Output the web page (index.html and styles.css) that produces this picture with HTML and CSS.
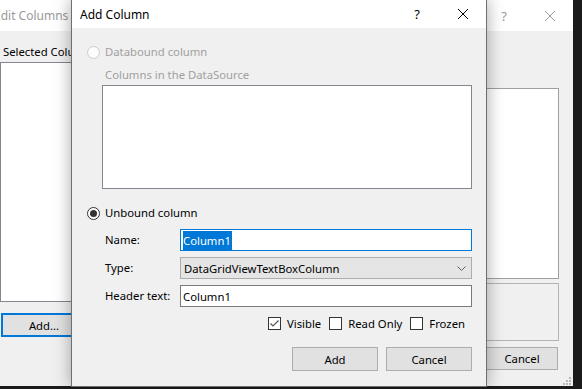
FILE: index.html
```html
<!DOCTYPE html>
<html>
  <head>
    <meta charset="utf-8" />
    <title>Add Column</title>
    <link rel="stylesheet" href="styles.css">
  </head>
  <body>
    <div class="window back">
      <div class="titlebar">
        <span class="title">Edit Columns</span>
        <span class="caption-btn help">?</span>
        <span class="caption-btn close">
          <svg width="10" height="10" viewBox="0 0 10 10"><path d="M0 0L10 10M10 0L0 10" /></svg>
        </span>
      </div>
      <div class="back-body">
        <div class="col-left">
          <div class="label">Selected Columns:</div>
          <div class="listbox selected-list"></div>
          <button class="btn focused add-more">Add...</button>
        </div>
        <div class="col-right">
          <div class="listbox props"></div>
          <div class="groupbox"></div>
          <div class="btn-row">
            <button class="btn small">Cancel</button>
          </div>
        </div>
      </div>
      <svg class="grip" width="9" height="9" viewBox="0 0 9 9">
        <rect x="7" y="1" width="2" height="2" />
        <rect x="4" y="4" width="2" height="2" />
        <rect x="7" y="4" width="2" height="2" />
        <rect x="1" y="7" width="2" height="2" />
        <rect x="4" y="7" width="2" height="2" />
        <rect x="7" y="7" width="2" height="2" />
      </svg>
    </div>

    <div class="window front">
      <div class="titlebar">
        <span class="title">Add Column</span>
        <span class="caption-btn help">?</span>
        <span class="caption-btn close">
          <svg width="10" height="10" viewBox="0 0 10 10"><path d="M0 0L10 10M10 0L0 10" /></svg>
        </span>
      </div>
      <div class="front-body">
        <label class="radio-row disabled">
          <span class="radio"></span>
          <span>Databound column</span>
        </label>
        <div class="indent">
          <div class="label disabled source-label">Columns in the DataSource</div>
          <div class="listbox source-list"></div>
        </div>
        <label class="radio-row unbound">
          <span class="radio checked"></span>
          <span>Unbound column</span>
        </label>
        <div class="indent">
          <div class="form-grid">
            <span class="label">Name:</span>
            <div class="textbox active"><span class="selection">Column1</span></div>
            <span class="label">Type:</span>
            <div class="combo">
              <span>DataGridViewTextBoxColumn</span>
              <svg width="9" height="5" viewBox="0 0 9 5"><path d="M0.5 0.5L4.5 4.5L8.5 0.5" /></svg>
            </div>
            <span class="label">Header text:</span>
            <div class="textbox">Column1</div>
          </div>
        </div>
        <div class="check-row">
          <label class="check-item">
            <span class="checkbox">
              <svg width="11" height="11" viewBox="0 0 11 11"><path d="M1.5 5.5L4 8L9.5 2.5" /></svg>
            </span>
            Visible
          </label>
          <label class="check-item"><span class="checkbox"></span>Read Only</label>
          <label class="check-item"><span class="checkbox"></span>Frozen</label>
        </div>
        <div class="btn-row dialog-buttons">
          <button class="btn">Add</button>
          <button class="btn">Cancel</button>
        </div>
      </div>
    </div>
  </body>
</html>
```

FILE: styles.css
```css
* {
  box-sizing: border-box;
}
html,
body {
  margin: 0;
  height: 100%;
}
body {
  background: #1b1b1b;
  font-family: "Segoe UI", "Noto Sans", sans-serif;
  font-size: 11.3px;
  color: #000;
  overflow: hidden;
  position: relative;
}

/* windows */
.window {
  position: absolute;
  background: #f0f0f0;
  display: flex;
  flex-direction: column;
}
.back {
  left: -14px;
  top: 0;
  width: 587px;
  height: 386px;
}
.front {
  left: 71px;
  top: -1px;
  width: 416px;
  height: 388px;
  border: 1px solid #6f6f6f;
  box-shadow: 0 0 16px rgba(0, 0, 0, 0.35);
}
.titlebar {
  background: #fff;
  display: flex;
  align-items: center;
  flex-shrink: 0;
}
.back .titlebar {
  height: 31px;
  color: #9a9a9a;
}
.front .titlebar {
  height: 28px;
}
.title {
  flex: 1;
  padding-left: 8px;
  font-size: 12px;
}
.caption-btn {
  width: 46px;
  align-self: stretch;
  display: flex;
  align-items: center;
  justify-content: center;
}
.caption-btn.help {
  font-size: 13px;
}
.caption-btn svg path {
  stroke: currentColor;
  stroke-width: 1;
  fill: none;
}

/* shared controls */
.label {
  height: 16px;
  line-height: 16px;
  margin-left: 3px;
  white-space: nowrap;
}
.disabled {
  color: #a0a0a0;
}
.listbox {
  background: #fff;
  border: 1px solid #828790;
}
.btn {
  font: inherit;
  color: #000;
  background: #e1e1e1;
  border: 1px solid #adadad;
  padding: 0;
  width: 86px;
  height: 24px;
}
.btn.focused {
  border: 2px solid #0078d7;
}
.btn-row {
  display: flex;
  justify-content: flex-end;
  gap: 8px;
}

/* back dialog */
.back-body {
  flex: 1;
  display: grid;
  grid-template-columns: 250px 1fr;
  column-gap: 20px;
  padding: 13px 14px 0 14px;
}
.col-left,
.col-right {
  display: flex;
  flex-direction: column;
}
.selected-list {
  margin-top: 2px;
  height: 240px;
}
.add-more {
  margin: 11px 0 0 1px;
}
.props {
  margin-top: 44px;
  height: 191px;
  border-color: #a0a0a0;
}
.groupbox {
  margin-top: 4px;
  height: 58px;
  border: 1px solid #b4b4b4;
}
.col-right .btn-row {
  margin: 6px 1px 0 0;
}
.btn.small {
  width: 72px;
  height: 23px;
}
.grip {
  position: absolute;
  right: 2px;
  bottom: 1px;
  fill: #b8b8b8;
}

/* add column dialog */
.front-body {
  display: flex;
  flex-direction: column;
  padding: 16px 14px 0 15px;
}
.radio-row {
  display: flex;
  align-items: center;
  gap: 5px;
  height: 16px;
  line-height: 16px;
}
.radio {
  width: 13px;
  height: 13px;
  border-radius: 50%;
  border: 1px solid #cccccc;
  background: #fcfcfc;
  position: relative;
}
.radio.checked {
  border-color: #333;
  background: #fff;
}
.radio.checked::after {
  content: "";
  position: absolute;
  left: 2px;
  top: 2px;
  width: 7px;
  height: 7px;
  border-radius: 50%;
  background: #333;
}
.indent {
  padding-left: 15px;
}
.source-label {
  margin-top: 7px;
}
.source-list {
  margin-top: 2px;
  height: 104px;
}
.unbound {
  margin-top: 16px;
}
.form-grid {
  margin-top: 8px;
  display: grid;
  grid-template-columns: 78px 1fr;
  grid-auto-rows: 22px;
  row-gap: 6px;
  align-items: center;
}
.textbox {
  height: 22px;
  background: #fff;
  border: 1px solid #7a7a7a;
  padding: 0 2px;
  display: flex;
  align-items: center;
}
.textbox.active {
  border-color: #0078d7;
}
.selection {
  background: #0078d7;
  color: #fff;
  line-height: 19px;
  padding-right: 1px;
}
.combo {
  height: 22px;
  background: #e5e5e5;
  border: 1px solid #adadad;
  padding: 0 5px 0 3px;
  display: flex;
  align-items: center;
  justify-content: space-between;
}
.combo svg path {
  stroke: #606060;
  fill: none;
}
.check-row {
  margin-top: 8px;
  height: 16px;
  display: flex;
  justify-content: flex-end;
  gap: 8px;
  padding-right: 7px;
}
.check-item {
  display: flex;
  align-items: center;
  gap: 6px;
  white-space: nowrap;
}
.checkbox {
  width: 13px;
  height: 13px;
  border: 1px solid #333;
  background: #fff;
  display: flex;
  align-items: center;
  justify-content: center;
}
.checkbox svg path {
  stroke: #555;
  stroke-width: 1.2;
  fill: none;
}
.dialog-buttons {
  margin-top: 16px;
}
```
